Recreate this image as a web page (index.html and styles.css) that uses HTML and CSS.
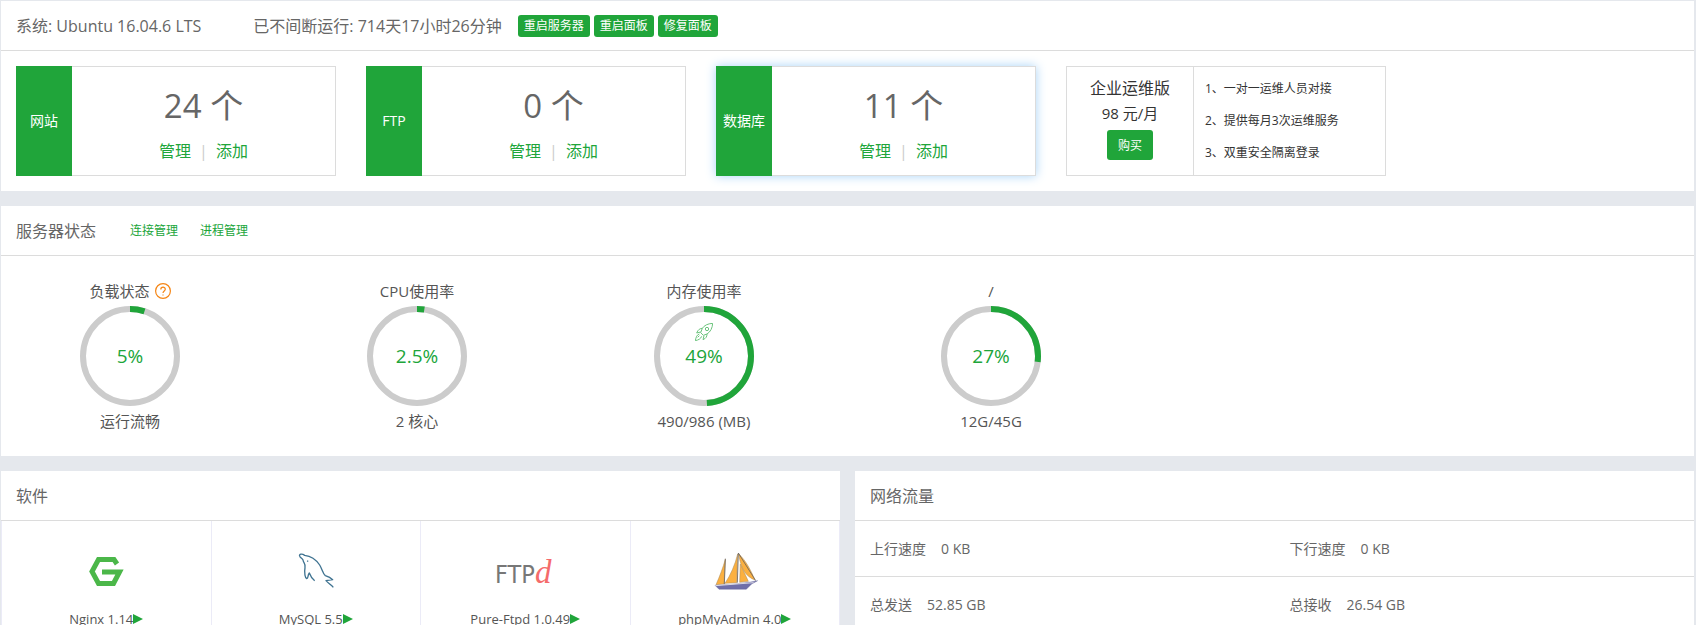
FILE: index.html
```html
<!DOCTYPE html>
<html lang="zh-CN">
<head>
<meta charset="utf-8">
<title>服务器面板</title>
<link rel="stylesheet" href="styles.css">
</head>
<body>
<main class="page">
  <section class="panel">
    <header class="panel-head">
      <span class="os">系统: Ubuntu 16.04.6 LTS</span>
      <span class="uptime">已不间断运行: 714天17小时26分钟</span>
      <div class="head-actions">
        <button type="button" class="btn btn-xs">重启服务器</button>
        <button type="button" class="btn btn-xs">重启面板</button>
        <button type="button" class="btn btn-xs">修复面板</button>
      </div>
    </header>
    <div class="cards">
      <article class="card">
        <h2 class="card-tab">网站</h2>
        <div class="card-body">
          <p class="count">24 个</p>
          <p class="card-links"><a href="#">管理</a><span class="bar">|</span><a href="#">添加</a></p>
        </div>
      </article>
      <article class="card">
        <h2 class="card-tab">FTP</h2>
        <div class="card-body">
          <p class="count">0 个</p>
          <p class="card-links"><a href="#">管理</a><span class="bar">|</span><a href="#">添加</a></p>
        </div>
      </article>
      <article class="card card-active">
        <h2 class="card-tab">数据库</h2>
        <div class="card-body">
          <p class="count">11 个</p>
          <p class="card-links"><a href="#">管理</a><span class="bar">|</span><a href="#">添加</a></p>
        </div>
      </article>
      <article class="card plan">
        <div class="plan-buy">
          <h2 class="plan-name">企业运维版</h2>
          <p class="plan-price">98 元/月</p>
          <button type="button" class="btn btn-buy">购买</button>
        </div>
        <ul class="plan-list">
          <li>1、一对一运维人员对接</li>
          <li>2、提供每月3次运维服务</li>
          <li>3、双重安全隔离登录</li>
        </ul>
      </article>
    </div>
  </section>

  <section class="panel">
    <header class="panel-head">
      <h2 class="panel-title">服务器状态</h2>
      <nav class="head-links"><a href="#">连接管理</a><a href="#">进程管理</a></nav>
    </header>
    <div class="gauges">
      <div class="gauge">
        <h3 class="gauge-label">负载状态
          <svg class="help" viewBox="0 0 16 16" aria-hidden="true"><circle cx="8" cy="8" r="7.4"/><path d="M5.8 6.4C5.8 3.4 10.3 3.5 10.3 6.2C10.3 8 8 7.9 8 10.1M8 11.4V12.6"/></svg>
        </h3>
        <div class="ring">
          <svg class="ring-art" viewBox="0 0 100 100" aria-hidden="true"><circle class="track" cx="50" cy="50" r="47"/><circle class="value" cx="50" cy="50" r="47" pathLength="100" stroke-dasharray="5 100"/></svg>
          <span class="ring-text">5%</span>
        </div>
        <p class="gauge-label">运行流畅</p>
      </div>
      <div class="gauge">
        <h3 class="gauge-label">CPU使用率</h3>
        <div class="ring">
          <svg class="ring-art" viewBox="0 0 100 100" aria-hidden="true"><circle class="track" cx="50" cy="50" r="47"/><circle class="value" cx="50" cy="50" r="47" pathLength="100" stroke-dasharray="2.5 100"/></svg>
          <span class="ring-text">2.5%</span>
        </div>
        <p class="gauge-label">2 核心</p>
      </div>
      <div class="gauge">
        <h3 class="gauge-label">内存使用率</h3>
        <div class="ring">
          <svg class="ring-art" viewBox="0 0 100 100" aria-hidden="true"><circle class="track" cx="50" cy="50" r="47"/><circle class="value" cx="50" cy="50" r="47" pathLength="100" stroke-dasharray="49 100"/></svg>
          <svg class="rocket" viewBox="0 0 54 54" aria-hidden="true"><path d="M53 1C38 2 28 7 22 16L17 29L25 37L36 33C47 26 52 15 53 1ZM22 16C15 16 9 20 5 30L17 27M36 33C36 41 33 46 24 50L27 38M13 33C6 35 3 42 1 53C10 51 17 48 20 40M8 43L13 38"/><circle cx="36" cy="18" r="5"/></svg>
          <span class="ring-text">49%</span>
        </div>
        <p class="gauge-label">490/986 (MB)</p>
      </div>
      <div class="gauge">
        <h3 class="gauge-label">/</h3>
        <div class="ring">
          <svg class="ring-art" viewBox="0 0 100 100" aria-hidden="true"><circle class="track" cx="50" cy="50" r="47"/><circle class="value" cx="50" cy="50" r="47" pathLength="100" stroke-dasharray="27 100"/></svg>
          <span class="ring-text">27%</span>
        </div>
        <p class="gauge-label">12G/45G</p>
      </div>
    </div>
  </section>

  <div class="columns">
    <section class="panel">
      <header class="panel-head"><h2 class="panel-title">软件</h2></header>
      <div class="apps">
        <a class="app" href="#">
          <svg class="app-icon" viewBox="0 0 60 44" aria-hidden="true"><path d="M41 14L38 9.5H22.5L16 21.5L22.5 33.5H37.5L43.5 22H26" fill="none" stroke="#4bb749" stroke-width="5"/></svg>
          <span class="app-name">Nginx 1.14<svg class="play" viewBox="0 0 10 10" aria-hidden="true"><path d="M0 0L10 5L0 10Z"/></svg></span>
        </a>
        <a class="app" href="#">
          <svg class="app-icon" viewBox="0 0 180 132" aria-hidden="true"><path d="M41 19C38 11 49 11 56 16C76 18 91 30 101 45C109 58 111 72 118 77C128 80 135 84 140 89L120 92C127 100 135 104 142 112M41 19C45 25 49 25 51 30C52 39 60 42 57 53C54 70 58 84 62 86C68 85 64 76 70 69C74 80 78 86 86 92M64 32L66 35" fill="none" stroke="#3f7391" stroke-width="4" stroke-linejoin="round"/></svg>
          <span class="app-name">MySQL 5.5<svg class="play" viewBox="0 0 10 10" aria-hidden="true"><path d="M0 0L10 5L0 10Z"/></svg></span>
        </a>
        <a class="app" href="#">
          <svg class="app-icon" viewBox="0 0 60 44" aria-hidden="true"><text class="logo-ftp" x="0" y="33">FTP</text><text class="logo-d" x="40" y="33">d</text></svg>
          <span class="app-name">Pure-Ftpd 1.0.49<svg class="play" viewBox="0 0 10 10" aria-hidden="true"><path d="M0 0L10 5L0 10Z"/></svg></span>
        </a>
        <a class="app" href="#">
          <svg class="app-icon" viewBox="0 0 180 132" aria-hidden="true"><g fill="#fbb040" stroke="#a98a5a" stroke-width="1.5"><path d="M61 28L57 102L33 104C44 80 54 52 61 28Z"/><path d="M98 12L95 98L60 100C77 74 90 45 98 12Z"/><path d="M106 42L130 94L104 97Z"/><path d="M101 11C124 34 137 60 150 90C124 80 108 60 101 11Z"/></g><path d="M61 26L58 103M100 9L97 98M100 9L152 92" fill="none" stroke="#6b6259" stroke-width="2.5"/><path d="M30 106C60 104 100 103 158 92L140 102L124 118H42Z" fill="#6f6fa9" stroke="#55558c" stroke-width="1"/><path d="M31 107L146 98" stroke="#d9d9e6" stroke-width="3"/></svg>
          <span class="app-name">phpMyAdmin 4.0<svg class="play" viewBox="0 0 10 10" aria-hidden="true"><path d="M0 0L10 5L0 10Z"/></svg></span>
        </a>
      </div>
    </section>
    <section class="panel">
      <header class="panel-head"><h2 class="panel-title">网络流量</h2></header>
      <dl class="traffic">
        <div class="stat"><dt>上行速度</dt><dd>0 KB</dd></div>
        <div class="stat"><dt>下行速度</dt><dd>0 KB</dd></div>
        <div class="stat"><dt>总发送</dt><dd>52.85 GB</dd></div>
        <div class="stat"><dt>总接收</dt><dd>26.54 GB</dd></div>
      </dl>
    </section>
  </div>
</main>
</body>
</html>
```
FILE: styles.css
```css
* { box-sizing: border-box; margin: 0; padding: 0; }

html { overflow: hidden; }

body {
  background: #e5e8ed;
  color: #666;
  font: 14px/20px "Open Sans", "Noto Sans CJK SC", sans-serif;
}

h2, h3 { font-weight: 400; }
a { color: #20a53a; text-decoration: none; }
ul { list-style: none; }

.page {
  display: flex;
  flex-direction: column;
  gap: 15px;
  padding: 1px 2px 0 1px;
}

.panel { background: #fff; min-width: 0; }

.panel-head {
  display: flex;
  align-items: center;
  height: 50px;
  padding: 0 15px;
  border-bottom: 1px solid #dcdcdc;
  font-size: 16px;
  white-space: nowrap;
}

.panel-title { font-size: 16px; }
.os { margin-right: 52px; }
.uptime { margin-right: 16px; }
.head-actions { display: flex; gap: 4px; }

.btn {
  border: 0;
  border-radius: 3px;
  background: #20a53a;
  color: #fff;
  font-family: inherit;
  font-size: 12px;
  cursor: pointer;
}

.btn-xs { height: 22px; padding: 0 6px; line-height: 22px; }
.btn-buy { width: 46px; height: 30px; }

.cards { display: flex; gap: 30px; padding: 15px; }

.card {
  display: flex;
  flex: 0 1 320px;
  height: 110px;
  border: 1px solid #dcdcdc;
}

.card-active { box-shadow: 0 0 10px #a8d3f7; }

.card-tab {
  display: flex;
  flex: none;
  align-items: center;
  justify-content: center;
  width: 56px;
  margin: -1px 0 -1px -1px;
  background: #20a53a;
  color: #fff;
  font-size: 14px;
}

.card-body { flex: 1; padding-top: 16px; text-align: center; }
.count { font-size: 33px; line-height: 46px; }
.card-links { margin-top: 10px; font-size: 16px; line-height: 24px; }
.bar { margin: 0 8px; color: #ccc; }

.plan { color: #333; }

.plan-buy {
  flex: 0 0 127px;
  padding-top: 9px;
  border-right: 1px solid #dcdcdc;
  text-align: center;
}

.plan-name { font-size: 16px; line-height: 25px; }
.plan-price { margin-bottom: 5px; font-size: 15px; line-height: 24px; }
.plan-list { padding: 6px 0 0 11px; font-size: 12px; line-height: 32px; }

.head-links { display: flex; gap: 22px; margin-left: 34px; font-size: 12px; }

.gauges { display: flex; padding: 25px 0 25px 15px; }
.gauge { flex: 0 1 287px; padding-right: 59px; text-align: center; color: #555; }

.gauge-label {
  display: flex;
  align-items: center;
  justify-content: center;
  gap: 5px;
  font-size: 15px;
  line-height: 20px;
}

.help { width: 16px; height: 16px; fill: none; stroke: #f58514; stroke-width: 1.2; }

.ring {
  position: relative;
  display: flex;
  align-items: center;
  justify-content: center;
  width: 100px;
  height: 100px;
  margin: 5px auto;
}

.ring-art {
  position: absolute;
  inset: 0;
  transform: rotate(-90deg);
  fill: none;
  stroke-width: 6;
}

.track { stroke: #ccc; }
.value { stroke: #20a53a; }
.ring-text { color: #20a53a; font-size: 19px; }

.rocket {
  position: absolute;
  top: 17px;
  left: 41px;
  width: 18px;
  height: 18px;
  fill: none;
  stroke: #6cc47d;
  stroke-width: 3;
}

.columns { display: grid; grid-template-columns: 1fr 1fr; gap: 15px; }

.apps {
  display: grid;
  grid-template-columns: repeat(4, 1fr);
  border-left: 1px solid #ebebf7;
}

.app {
  display: flex;
  flex-direction: column;
  align-items: center;
  gap: 15px;
  padding: 29px 0 31px;
  border-right: 1px solid #ebebf7;
  color: #555;
}

.app-icon { width: 60px; height: 44px; }
.app-name { display: flex; align-items: center; font-size: 13px; white-space: nowrap; }
.play { width: 10px; height: 10px; fill: #20a53a; }
.logo-ftp { fill: #777; font: 25px "Liberation Sans Narrow", "DejaVu Sans Condensed", sans-serif; }
.logo-d { fill: #f56b6b; font: italic 33px "Liberation Serif", serif; }

.traffic { display: grid; grid-template-columns: 1fr 1fr; }

.stat {
  display: flex;
  align-items: center;
  gap: 15px;
  height: 56px;
  padding: 0 15px;
  border-bottom: 1px solid #dcdcdc;
}
```
